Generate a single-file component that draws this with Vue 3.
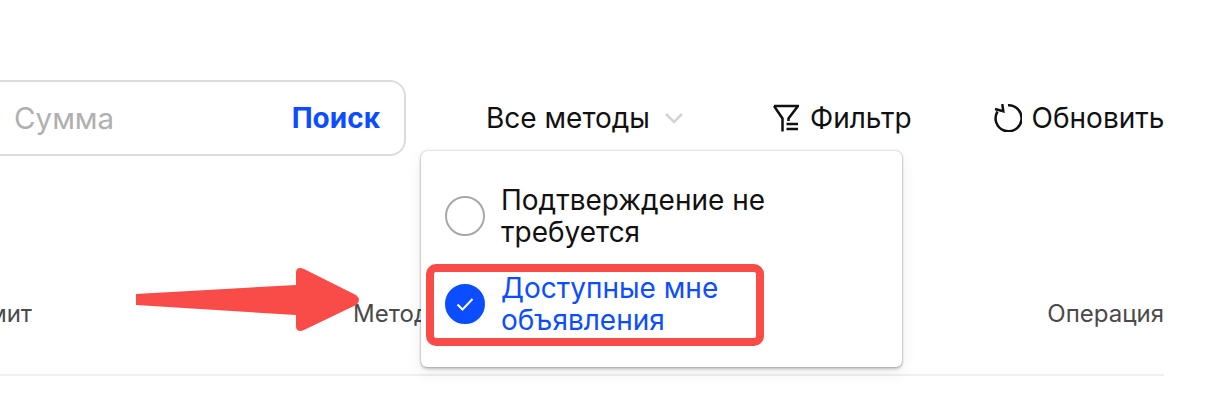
<script setup>
const columns = ['имит', 'Метод', 'Операция']
</script>

<template>
  <div class="page">
    <div class="toolbar">
      <div class="search">
        <span class="placeholder">Сумма</span>
        <span class="search-btn">Поиск</span>
      </div>
      <div class="method">
        <span>Все методы</span>
        <svg class="chev" width="20" height="12" viewBox="0 0 20 12"><path d="M2 2l8 8 8-8" fill="none" stroke="#d4d4d4" stroke-width="2.6"/></svg>
      </div>
      <div class="action filter">
        <svg width="26" height="28" viewBox="0 0 26 28" fill="none" stroke="#111" stroke-width="2.5"><path d="M1 2h24L15.500 14.500V17" /><path d="M1 2l8.500 12.500V27.500" /><path d="M13.500 20H25M13.500 25H25" /></svg>
        <span>Фильтр</span>
      </div>
      <div class="action refresh">
        <svg width="28" height="28" viewBox="0 0 28 28" fill="none" stroke="#111" stroke-width="2.5"><path d="M14 1.300A13 13 0 1 1 3.500 7.500" /><path d="M8.300 0L9.300 7.300L1 5" /></svg>
        <span>Обновить</span>
      </div>
    </div>

    <div class="header-row">
      <span class="col col-limit">{{ columns[0] }}</span>
      <span class="col col-method">{{ columns[1] }}</span>
      <span class="col col-op">{{ columns[2] }}</span>
    </div>

    <div class="dropdown">
      <div class="option">
        <span class="radio"></span>
        <span class="label">Подтверждение не требуется</span>
      </div>
      <div class="option selected">
        <span class="radio on">
          <svg width="18" height="14" viewBox="0 0 18 14"><path d="M1.500 7.500L6.500 12.500L16.500 2" fill="none" stroke="#fff" stroke-width="2"/></svg>
        </span>
        <span class="label">Доступные мне объявления</span>
      </div>
    </div>

    <svg class="arrow" width="226" height="66" viewBox="0 0 226 66"><path d="M0 27L160 18V6Q160 -1 168 2L220 28Q226 33 220 38L168 63Q160 66 160 59V48L0 38Z" fill="#f94c48"/></svg>
  </div>
</template>

<style>
body { margin: 0; background: #fff; }
</style>

<style scoped>
.page {
  position: relative;
  width: 1208px;
  height: 402px;
  overflow: hidden;
  background: #fff;
  font-family: Inter, "Liberation Sans", sans-serif;
  color: #111;
}
.toolbar {
  display: flex;
  align-items: center;
  height: 76px;
  padding-top: 80px;
  font-size: 28px;
  white-space: nowrap;
}
.search {
  box-sizing: border-box;
  flex: none;
  width: 426px;
  height: 76px;
  margin-left: -20px;
  padding: 0 24px 0 32px;
  display: flex;
  align-items: center;
  justify-content: space-between;
  border: 2px solid #dcdcdc;
  border-radius: 16px;
}
.placeholder { color: #b0b0b0; font-size: 29.500px; }
.search-btn { color: #0b4dff; font-weight: 700; font-size: 28px; }
.method {
  margin-left: 80px;
  display: flex;
  align-items: center;
  gap: 14px;
}
.action { display: flex; align-items: center; gap: 10px; }
.filter { margin-left: 89px; gap: 11px; }
.refresh { margin-left: 82px; }
.header-row {
  display: flex;
  box-sizing: border-box;
  width: 1164px;
  height: 220px;
  padding-top: 144px;
  border-bottom: 2px solid #f0f0f0;
  font-size: 24px;
  color: #4a4a4a;
  white-space: nowrap;
}
.col { line-height: 28px; }
.col-limit { margin-left: -26px; }
.col-method { margin-left: 321px; }
.col-op { margin-left: auto; }
.dropdown {
  position: absolute;
  left: 421px;
  top: 151px;
  box-sizing: border-box;
  width: 481px;
  height: 216px;
  padding: 33px 24px 0;
  background: #fff;
  border-radius: 6px;
  box-shadow: 0 0 2px rgba(0,0,0,.35), 0 2px 3px rgba(0,0,0,.2), 0 6px 16px rgba(0,0,0,.08);
  font-size: 28px;
  line-height: 32px;
}
.option { display: flex; align-items: center; gap: 16px; }
.option + .option { margin-top: 24px; }
.selected {
  position: relative;
  color: #0b4dff;
}
.selected::before {
  content: "";
  position: absolute;
  left: -19px;
  top: -8px;
  box-sizing: border-box;
  width: 338px;
  height: 82px;
  border: 8px solid #f94c48;
  border-radius: 10px;
}
.label { width: 300px; position: relative; }
.radio {
  flex: none;
  box-sizing: border-box;
  width: 40px;
  height: 40px;
  border: 2px solid #a8a8a8;
  border-radius: 50%;
  display: flex;
  align-items: center;
  justify-content: center;
  position: relative;
}
.radio.on { background: #0b4dff; border-color: #0b4dff; }
.arrow {
  position: absolute;
  left: 136px;
  top: 267px;
}
</style>
